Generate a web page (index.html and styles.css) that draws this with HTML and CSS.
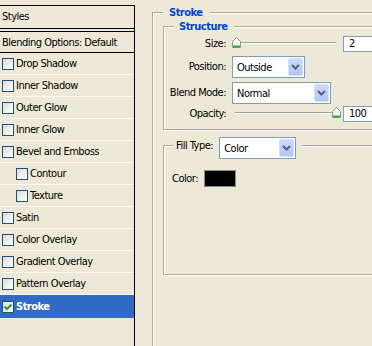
FILE: index.html
```html
<!DOCTYPE html>
<html>
<head>
<meta charset="utf-8">
<link rel="stylesheet" href="styles.css">
</head>
<body>
<div class="dialog">
  <aside class="styles-panel">
    <div class="panel-head">Styles</div>
    <ul class="style-list">
      <li class="style-item blend">Blending Options: Default</li>
      <li class="style-item"><span class="cb"></span>Drop Shadow</li>
      <li class="style-item"><span class="cb"></span>Inner Shadow</li>
      <li class="style-item"><span class="cb"></span>Outer Glow</li>
      <li class="style-item"><span class="cb"></span>Inner Glow</li>
      <li class="style-item"><span class="cb"></span>Bevel and Emboss</li>
      <li class="style-item sub"><span class="cb"></span>Contour</li>
      <li class="style-item sub"><span class="cb"></span>Texture</li>
      <li class="style-item"><span class="cb"></span>Satin</li>
      <li class="style-item"><span class="cb"></span>Color Overlay</li>
      <li class="style-item"><span class="cb"></span>Gradient Overlay</li>
      <li class="style-item"><span class="cb"></span>Pattern Overlay</li>
      <li class="style-item selected"><span class="cb checked"><svg width="10" height="10" viewBox="0 0 10 10"><path d="M1.5 4.5 L4 7 L8.5 2.5" fill="none" stroke="#21a121" stroke-width="2"/></svg></span>Stroke</li>
    </ul>
  </aside>
  <main class="options">
    <div class="group outer">
      <div class="group-title">Stroke</div>
      <div class="group structure">
        <div class="group-title">Structure</div>
        <div class="form">
          <span class="label">Size:</span>
          <div class="slider-field">
            <div class="slider">
              <div class="track"></div>
              <svg class="thumb" style="left:0px" width="9" height="11" viewBox="0 0 9 11"><path d="M0.5 4.5 L4.5 0.5 L8.5 4.5 V10.5 H0.5 Z" fill="#f4f3ee" stroke="#8a9a8a"/><path d="M1 9.5 H8" stroke="#2eae2e" stroke-width="2"/></svg>
            </div>
            <div class="textbox">2</div>
          </div>
          <span class="label">Position:</span>
          <div class="combo combo-pos"><span class="combo-text">Outside</span><span class="combo-btn"><svg width="9" height="6" viewBox="0 0 9 6"><path d="M1 1 L4.5 4.5 L8 1" fill="none" stroke="#4d6185" stroke-width="2"/></svg></span></div>
          <span class="label">Blend Mode:</span>
          <div class="combo combo-blend"><span class="combo-text">Normal</span><span class="combo-btn"><svg width="9" height="6" viewBox="0 0 9 6"><path d="M1 1 L4.5 4.5 L8 1" fill="none" stroke="#4d6185" stroke-width="2"/></svg></span></div>
          <span class="label opacity-label">Opacity:</span>
          <div class="slider-field opacity-field">
            <div class="slider">
              <div class="track"></div>
              <svg class="thumb" style="left:100px" width="9" height="11" viewBox="0 0 9 11"><path d="M0.5 4.5 L4.5 0.5 L8.5 4.5 V10.5 H0.5 Z" fill="#f4f3ee" stroke="#8a9a8a"/><path d="M1 9.5 H8" stroke="#2eae2e" stroke-width="2"/></svg>
            </div>
            <div class="textbox">100</div>
          </div>
        </div>
      </div>
      <div class="group fill">
        <div class="group-title fill-title">
          <span class="label">Fill Type:</span>
          <div class="combo combo-fill"><span class="combo-text">Color</span><span class="combo-btn"><svg width="9" height="6" viewBox="0 0 9 6"><path d="M1 1 L4.5 4.5 L8 1" fill="none" stroke="#4d6185" stroke-width="2"/></svg></span></div>
        </div>
        <div class="color-row">
          <span class="label">Color:</span>
          <span class="swatch"></span>
        </div>
      </div>
    </div>
  </main>
</div>
</body>
</html>
```

FILE: styles.css
```css
* { box-sizing: border-box; }
html, body {
  margin: 0;
  height: 100%;
  overflow: hidden;
  background: #ece9d8;
}
body {
  font-family: "DejaVu Sans Condensed", "DejaVu Sans", sans-serif;
  font-stretch: condensed;
  font-size: 11px;
  letter-spacing: -0.5px;
  color: #000;
}
.dialog {
  display: flex;
  height: 346px;
}
.styles-panel {
  width: 135px;
  flex: none;
  margin-top: 5px;
  border-top: 1px solid #000;
  border-right: 1px solid #000;
}
.panel-head {
  height: 23px;
  line-height: 22px;
  padding-left: 2px;
  border-bottom: 1px solid #000;
}
.style-list {
  list-style: none;
  margin: 2px 0 0;
  padding: 0;
  border-top: 1px solid #000;
}
.style-item {
  display: flex;
  align-items: center;
  gap: 2px;
  height: 22px;
  padding-left: 2px;
  border-bottom: 1px solid #fbfaf5;
  white-space: nowrap;
}
.style-item.blend {
  height: 21px;
  border-bottom-color: #000;
}
.style-item.sub { padding-left: 16px; }
.style-item.selected {
  height: 23px;
  padding-top: 1px;
  background: #316ac5;
  color: #fff;
  font-weight: bold;
  border-bottom-color: #316ac5;
}
.cb {
  width: 12px;
  height: 12px;
  flex: none;
  border: 1px solid #1c5180;
  background: linear-gradient(135deg, #dcdcd5 0%, #f2f2ee 60%, #fff 100%);
  display: flex;
  align-items: center;
  justify-content: center;
}
.cb.checked svg { display: block; }

.options {
  flex: 1;
  overflow: hidden;
  padding-left: 17px;
  padding-top: 12px;
}
.group {
  position: relative;
  border: 1px solid #aca899;
  box-shadow: inset 1px 1px 0 #fff, 1px 1px 0 #fff;
}
.group.outer {
  width: 300px;
  height: 400px;
  padding: 13px 0 0 10px;
}
.group-title {
  position: absolute;
  top: -7px;
  left: 10px;
  padding: 0 7px 0 6px;
  background: #ece9d8;
  color: #0046d5;
  font-weight: bold;
  line-height: 13px;
}
.group.structure {
  height: 104px;
  padding-top: 9px;
}
.structure .group-title { padding: 0 6px 0 5px; }
.form {
  display: grid;
  grid-template-columns: 62px auto;
  column-gap: 6px;
  row-gap: 4px;
  align-items: center;
  justify-items: start;
}
.label {
  white-space: nowrap;
  line-height: 13px;
}
.form .label {
  justify-self: end;
  padding-bottom: 2px;
}
.opacity-label,
.opacity-field { margin-top: -2px; }
.slider-field {
  display: flex;
  align-items: center;
}
.slider {
  position: relative;
  width: 111px;
  height: 16px;
}
.track {
  position: absolute;
  left: 3px;
  width: 101px;
  top: 6px;
  height: 2px;
  border-top: 1px solid #a19f95;
  border-bottom: 1px solid #fff;
}
.thumb {
  position: absolute;
  top: 1px;
  display: block;
}
.textbox {
  width: 40px;
  height: 16px;
  border: 1px solid #7f9db9;
  background: #fff;
  padding-left: 5px;
  line-height: 14px;
}
.combo {
  display: flex;
  align-items: stretch;
  height: 22px;
  border: 1px solid #7f9db9;
  background: #fff;
  padding: 1px;
}
.combo-text {
  flex: 1;
  padding-left: 3px;
  line-height: 19px;
  white-space: nowrap;
}
.combo-btn {
  width: 15px;
  flex: none;
  display: flex;
  align-items: center;
  justify-content: center;
  border: 1px solid #d5e0fb;
  border-radius: 2px;
  background: linear-gradient(#cddbfb, #b2c6f4);
}
.combo-btn svg { display: block; }
.combo-pos { width: 73px; }
.combo-blend { width: 99px; }
.combo-fill { width: 77px; }

.group.fill {
  margin-top: 15px;
  height: 130px;
  padding: 24px 0 0 8px;
}
.fill-title {
  display: flex;
  align-items: flex-start;
  gap: 6px;
  top: -9px;
  left: 9px;
  padding: 0 6px 0 3px;
  color: #000;
  font-weight: normal;
}
.fill-title .label { margin-top: 2px; }
.color-row {
  display: flex;
  align-items: center;
  gap: 6px;
}
.swatch {
  width: 32px;
  height: 17px;
  background: #000;
  border: 1px solid #8c8c8c;
}
```
